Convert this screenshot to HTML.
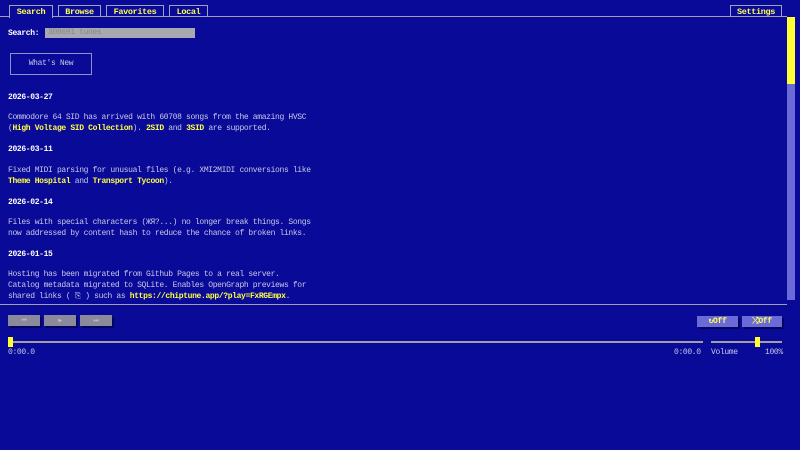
<!DOCTYPE html><html><head><style>
*{margin:0;padding:0;box-sizing:border-box}
body{width:800px;height:450px;background:#0a0a98;overflow:hidden;font-family:"Liberation Mono",monospace;font-size:8px;letter-spacing:-0.35px;color:#c8c8e8;position:relative}
.a{position:absolute;white-space:pre}
.tab{position:absolute;top:5px;height:12px;border:1px solid #a0a0c0;border-bottom:none;color:#ffff55;font-weight:bold;text-align:center;line-height:12px;font-size:8.5px}
.b{color:#ffff44;font-weight:bold}
.w{color:#fff;font-weight:bold}
.btn{position:absolute;top:315px;height:11px;width:32px;background:#8a8a9c;box-shadow:2px 2px 0 #050560;color:#c0c0d0;font-size:6px;text-align:center;line-height:11px}
.rb{position:absolute;top:316px;height:11px;background:#6a6ad8;color:#ffff55;font-weight:bold;text-align:center;line-height:11px;box-shadow:2px 2px 0 #050560}
</style></head><body>
<div class="a" style="left:0;top:16px;width:787px;height:1px;background:#a0a0b0"></div>
<div class="tab" style="left:9px;width:44px;height:13px;background:#0a0a98">Search</div>
<div class="tab" style="left:58px;width:43px">Browse</div>
<div class="tab" style="left:106px;width:58px">Favorites</div>
<div class="tab" style="left:169px;width:39px">Local</div>
<div class="tab" style="left:730px;width:52px">Settings</div>
<div class="a" style="left:787px;top:17px;width:8px;height:67px;background:#ffff33"></div>
<div class="a" style="left:787px;top:84px;width:8px;height:216px;background:#6a6ad8"></div>
<div class="a w" style="left:8px;top:28px;line-height:11px">Search:</div>
<div class="a" style="left:45px;top:28px;width:150px;height:10px;background:#a8a8b0;color:#888;line-height:10px;padding-left:3px">308691 tunes</div>
<div class="a" style="left:10px;top:53px;width:82px;height:22px;border:1px solid #9090c8;text-align:center;line-height:20px">What's New</div>
<div class="a w" style="left:8px;top:92px;line-height:11px">2026-03-27</div>
<div class="a" style="left:8px;top:112px;line-height:11px">Commodore 64 SID has arrived with 60708 songs from the amazing HVSC
(<span class="b">High Voltage SID Collection</span>). <span class="b">2SID</span> and <span class="b">3SID</span> are supported.</div>
<div class="a w" style="left:8px;top:144px;line-height:11px">2026-03-11</div>
<div class="a" style="left:8px;top:165px;line-height:11px">Fixed MIDI parsing for unusual files (e.g. XMI2MIDI conversions like
<span class="b">Theme Hospital</span> and <span class="b">Transport Tycoon</span>).</div>
<div class="a w" style="left:8px;top:197px;line-height:11px">2026-02-14</div>
<div class="a" style="left:8px;top:217px;line-height:11px">Files with special characters (ЖЯ?...) no longer break things. Songs
now addressed by content hash to reduce the chance of broken links.</div>
<div class="a w" style="left:8px;top:249px;line-height:11px">2026-01-15</div>
<div class="a" style="left:8px;top:269px;line-height:11px">Hosting has been migrated from Github Pages to a real server.
Catalog metadata migrated to SQLite. Enables OpenGraph previews for
shared links ( ⎘ ) such as <span class="b">https://chiptune.app/?play=FxRGEmpx</span>.</div>
<div class="a" style="left:0;top:304px;width:787px;height:1px;background:#a0a0b0"></div>
<div class="btn" style="left:8px">⏮</div>
<div class="btn" style="left:44px">▶</div>
<div class="btn" style="left:80px">⏭</div>
<div class="rb" style="left:697px;width:41px">↻Off</div>
<div class="rb" style="left:742px;width:40px">⤮Off</div>
<div class="a" style="left:8px;top:341px;width:695px;height:2px;background:#a0a0a0"></div>
<div class="a" style="left:8px;top:337px;width:5px;height:10px;background:#ffff33"></div>
<div class="a" style="left:711px;top:341px;width:71px;height:2px;background:#a0a0a0"></div>
<div class="a" style="left:755px;top:337px;width:5px;height:10px;background:#ffff33"></div>
<div class="a" style="left:8px;top:347px;line-height:11px">0:00.0</div>
<div class="a" style="left:674px;top:347px;line-height:11px">0:00.0</div>
<div class="a" style="left:711px;top:347px;line-height:11px">Volume</div>
<div class="a" style="left:765px;top:347px;line-height:11px">100%</div>
</body></html>
